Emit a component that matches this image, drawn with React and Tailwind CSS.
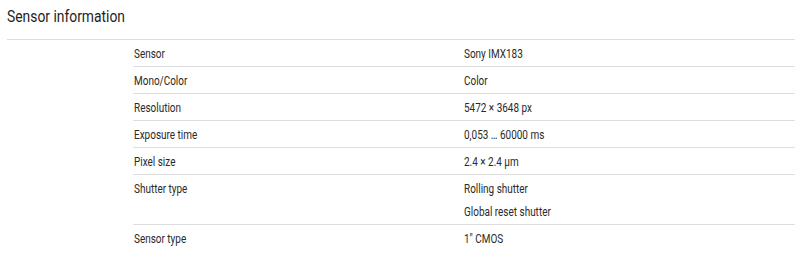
import React from 'react';

// Sensor spec table, text is a bit condensed in the reference so spans are squeezed with scale-x
const rows = [
  { label: 'Sensor', values: ['Sony IMX183'] },
  { label: 'Mono/Color', values: ['Color'] },
  { label: 'Resolution', values: ['5472 × 3648 px'] },
  { label: 'Exposure time', values: ['0,053 … 60000 ms'] },
  { label: 'Pixel size', values: ['2.4 × 2.4 µm'] },
  { label: 'Shutter type', values: ['Rolling shutter', 'Global reset shutter'] },
  { label: 'Sensor type', values: ['1" CMOS'] },
];

const Squeeze = ({ children }) => (
  <span className="inline-block origin-left scale-x-[0.83] whitespace-nowrap">{children}</span>
);

export default function App() {
  return (
    <div className="w-[800px] h-[257px] overflow-hidden bg-white pl-[7px] pr-[5px] font-['Roboto',sans-serif] text-[#2a2a2a]">
      <div className="h-[40px] pt-[4px] border-b border-[#dedede]">
        <h2 className="text-[16.5px] leading-[26px] text-[#1e1e1e]">
          <span className="inline-block origin-left scale-x-[0.84] whitespace-nowrap">Sensor information</span>
        </h2>
      </div>

      <div className="ml-[126px]">
        {rows.map((row, i) => (
          <div
            key={row.label}
            className={`flex items-start pt-[3px] text-[12px] leading-[23px] ${
              i < rows.length - 1 ? 'border-b border-[#dedede]' : ''
            }`}
          >
            <div className="w-[331px] pl-[1px]">
              <Squeeze>{row.label}</Squeeze>
            </div>
            <div className="flex-1 flex flex-col">
              {row.values.map((v) => (
                <div key={v}>
                  <Squeeze>{v}</Squeeze>
                </div>
              ))}
            </div>
          </div>
        ))}
      </div>
    </div>
  );
}
